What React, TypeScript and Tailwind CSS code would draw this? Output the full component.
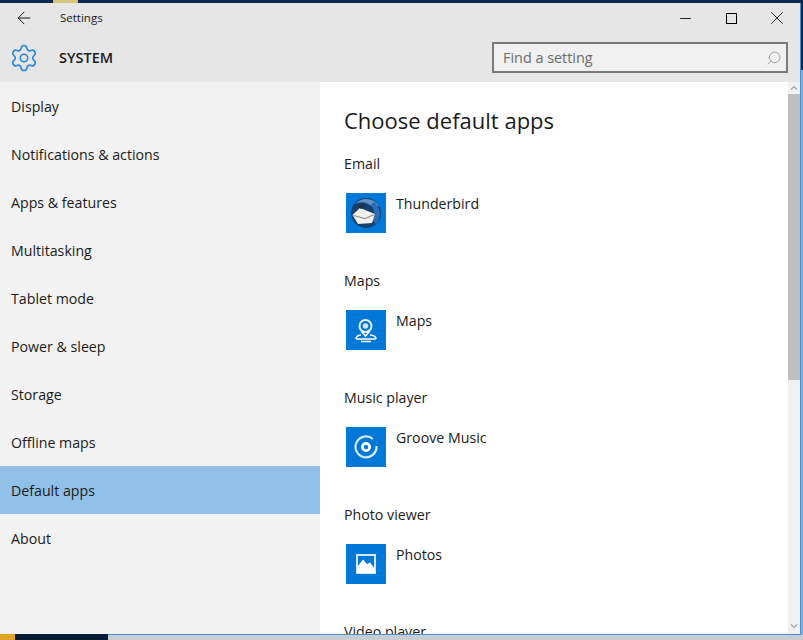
import { ArrowLeft, Minus, X, Search, Settings } from 'lucide-react'
import type { ReactNode } from 'react'

const navItems = [
  'Display',
  'Notifications & actions',
  'Apps & features',
  'Multitasking',
  'Tablet mode',
  'Power & sleep',
  'Storage',
  'Offline maps',
  'Default apps',
  'About',
]

function AppTile({ children }: { children: ReactNode }) {
  return (
    <div className="h-10 w-10 shrink-0 bg-[#0078d7]">
      <svg viewBox="0 0 40 40" className="h-10 w-10">
        {children}
      </svg>
    </div>
  )
}

const apps = [
  {
    label: 'Email',
    name: 'Thunderbird',
    icon: (
      <>
        <circle cx="20" cy="20" r="15" fill="#17406f" />
        <path d="M9 11 A15 15 0 0 1 33 13 L28 15 Q18 6 9 11Z" fill="#5f93c6" />
        <path d="M28 9 A15 15 0 0 1 30 31 L26.5 27 Q31 19 24.5 12Z" fill="#2a6db5" />
        <path d="M6.5 22 L14 15 L29 21 L26 30 L12 31Z" fill="#f2f1ea" />
        <path d="M7.5 22.5 L19 25.5 L28.5 21.5" fill="none" stroke="#8d96a3" strokeWidth="1.2" />
        <path d="M11 13 Q15 9 20 13 L15 16Z" fill="#22324c" />
      </>
    ),
  },
  {
    label: 'Maps',
    name: 'Maps',
    icon: (
      <>
        <circle cx="19.5" cy="16" r="6" fill="none" stroke="#e8f2fb" strokeWidth="2" />
        <circle cx="19.5" cy="16" r="2.8" fill="#cfe4f7" />
        <path d="M15.5 21.5 L19.5 26 L23.5 21.5" fill="none" stroke="#fff" strokeWidth="1.6" />
        <path d="M10 29 Q10 25.5 15 25 M30 29 Q30 25.5 24 25" fill="none" stroke="#fff" strokeWidth="1.6" />
        <path d="M10 29 H30 M15 31.5 H25" stroke="#fff" strokeWidth="1.6" />
      </>
    ),
  },
  {
    label: 'Music player',
    name: 'Groove Music',
    icon: (
      <>
        <path d="M27 12 A10.5 10.5 0 1 0 30.5 19" fill="none" stroke="#d5e8f9" strokeWidth="2.2" />
        <circle cx="20" cy="20" r="3.6" fill="none" stroke="#fff" strokeWidth="2.8" />
      </>
    ),
  },
  {
    label: 'Photo viewer',
    name: 'Photos',
    icon: (
      <>
        <rect x="11" y="11" width="18" height="18" fill="none" stroke="#d5e8f9" strokeWidth="2" />
        <path d="M11 29 V23 L17 15.5 L21 20 L24 18.5 L29 25 V29Z" fill="#fff" />
      </>
    ),
  },
]

export default function App() {
  return (
    <div className="h-[640px] w-[803px] overflow-hidden bg-[#c9cdd1] font-['Open_Sans','Noto_Sans',sans-serif] text-[#1a1a1a]">
      <div className="flex h-[3px] bg-[#0a2b4d]">
        <div className="ml-[53px] w-[25px] bg-[#d9c27a]" />
      </div>
      <div className="flex">
        <div className="flex h-[632px] w-[801px] flex-col overflow-hidden border-r border-b border-[#4f8fc9]">
          <header className="flex h-[79px] shrink-0 flex-col bg-[#e6e6e6]">
            <div className="flex h-[30px] items-center">
              <div className="flex w-[60px] pl-[14px]">
                <ArrowLeft className="h-5 w-5" strokeWidth={1.2} />
              </div>
              <span className="text-[11.5px]">Settings</span>
              <div className="ml-auto flex items-center">
                <div className="flex w-[46px] justify-center">
                  <Minus className="h-[17px] w-[17px]" strokeWidth={1.4} />
                </div>
                <div className="flex w-[46px] justify-center">
                  <div className="h-[11px] w-[11px] border border-black" />
                </div>
                <div className="flex w-[46px] justify-center">
                  <X className="h-[22px] w-[22px]" strokeWidth={1} />
                </div>
              </div>
            </div>
            <div className="mt-[9px] flex items-center">
              <div className="flex w-[59px] pl-[9px]">
                <Settings className="h-[30px] w-[30px] text-[#2b88d8]" strokeWidth={1.3} />
              </div>
              <span className="text-[14.5px] font-semibold">SYSTEM</span>
              <div className="mr-[12px] ml-auto flex h-[31px] w-[296px] items-center justify-between border-2 border-[#7a7a7a] bg-[#f0f0f0] pr-[4px] pl-[9px]">
                <span className="text-[14.4px] text-[#6b6b6b]">Find a setting</span>
                <Search className="h-4 w-4 -scale-x-100 text-[#8a8a8a]" strokeWidth={1.1} />
              </div>
            </div>
          </header>
          <div className="flex min-h-0 flex-1">
            <nav className="w-[320px] shrink-0 bg-[#f2f2f2]">
              {navItems.map((item) => (
                <div
                  key={item}
                  className={`flex h-12 items-center pt-[2px] pl-[11px] text-[14.2px] ${item === 'Default apps' ? 'bg-[#91c1e8]' : ''}`}
                >
                  {item}
                </div>
              ))}
            </nav>
            <main className="min-w-0 flex-1 overflow-hidden bg-white pt-[21px] pl-[24px]">
              <h1 className="text-[22px] leading-[34px]">Choose default apps</h1>
              <div className="mt-[17px] flex flex-col">
                {apps.map((app) => (
                  <section key={app.label} className="h-[117px]">
                    <div className="text-[14.2px] leading-5">{app.label}</div>
                    <div className="mt-[19px] ml-[2px] flex">
                      <AppTile>{app.icon}</AppTile>
                      <span className="ml-[10px] pt-px text-[14.2px] leading-5">{app.name}</span>
                    </div>
                  </section>
                ))}
                <div className="text-[14.2px] leading-5">Video player</div>
              </div>
            </main>
            <div className="flex w-[12px] shrink-0 flex-col items-center bg-[#f0f0f0]">
              <svg viewBox="0 0 12 12" className="h-3 w-3 text-[#a6a6a6]">
                <path d="M3 7.5 L6 4.5 L9 7.5" fill="none" stroke="currentColor" strokeWidth="1.2" />
              </svg>
              <div className="h-[286px] w-full bg-[#bfbfbf]" />
              <svg viewBox="0 0 12 12" className="mt-auto mb-[2px] h-3 w-3 text-[#a6a6a6]">
                <path d="M3 4.5 L6 7.5 L9 4.5" fill="none" stroke="currentColor" strokeWidth="1.2" />
              </svg>
            </div>
          </div>
        </div>
        <div className="flex w-[2px] flex-col bg-[#7fb2e2]">
          <div className="h-[67px] bg-[#0a2b4d]" />
        </div>
      </div>
      <div className="relative -mt-px flex h-[6px]">
        <div className="w-[15px] bg-[#e0a526]" />
        <div className="w-[93px] bg-[#0a1c36]" />
      </div>
    </div>
  )
}
